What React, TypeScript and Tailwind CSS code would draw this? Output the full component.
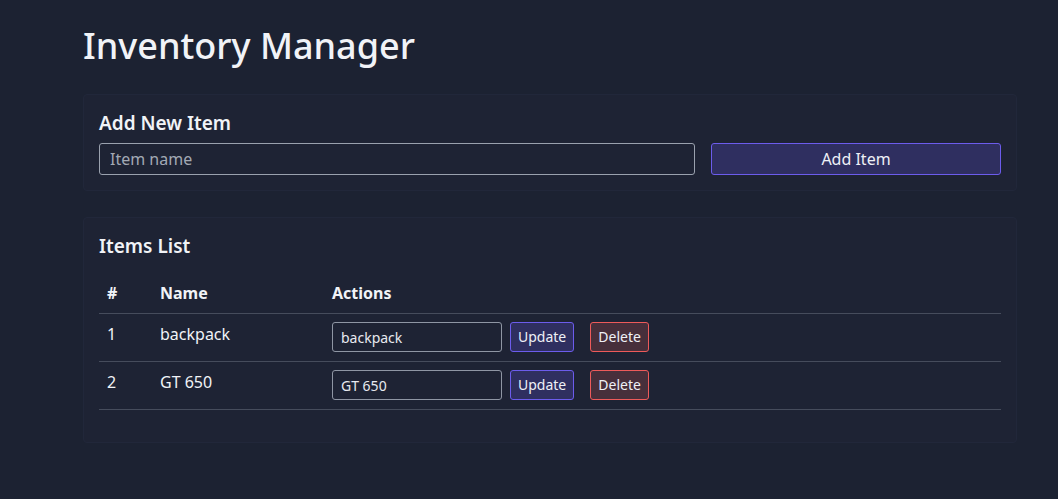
import React, { useState } from 'react'

type Item = { id: number; name: string }

const App = () => {
  const [items, setItems] = useState<Item[]>([
    { id: 1, name: 'backpack' },
    { id: 2, name: 'GT 650' }
  ])
  const [drafts, setDrafts] = useState<Record<number, string>>({ 1: 'backpack', 2: 'GT 650' })
  const [newName, setNewName] = useState('')

  const addItem = () => {
    if (!newName.trim()) return
    const id = items.length ? Math.max(...items.map((i) => i.id)) + 1 : 1
    setItems([...items, { id, name: newName }])
    setDrafts({ ...drafts, [id]: newName })
    setNewName('')
  }

  const updateItem = (id: number) => {
    setItems(items.map((i) => (i.id === id ? { ...i, name: drafts[id] } : i)))
  }

  const deleteItem = (id: number) => {
    setItems(items.filter((i) => i.id !== id))
  }

  return (
    <div
      className="min-h-[499px] bg-[#1c2232] text-[#f1f3f7] pl-[83px] pr-[41px] pt-[22px] pb-10"
      style={{ fontFamily: '"Noto Sans", "Open Sans", sans-serif' }}
    >
      <h1 className="text-[36px] leading-[48px] font-medium mb-[24px]">Inventory Manager</h1>

      {/* Add form */}
      <div className="bg-[#1e2334] border border-[#21273a] rounded px-[15px] pt-[14px] pb-[15px] mb-[26px]">
        <h2 className="text-[19px] leading-[28px] font-semibold mb-[6px]">Add New Item</h2>
        <div className="flex gap-4">
          <input
            value={newName}
            onChange={(e) => setNewName(e.target.value)}
            placeholder="Item name"
            className="flex-1 h-8 bg-transparent border border-[#9aa1ae] rounded-[3px] px-2.5 text-base text-[#e5e7eb] placeholder:text-[#a3a9b4] outline-none"
          />
          <button
            onClick={addItem}
            className="w-[290px] h-8 bg-[#2f2f60] border border-[#6c5cec] rounded-[3px] text-base text-[#eef0f6]"
          >
            Add Item
          </button>
        </div>
      </div>

      {/* Items list */}
      <div className="bg-[#1e2334] border border-[#21273a] rounded px-[15px] pt-[14px] pb-[32px]">
        <h2 className="text-[19px] leading-[28px] font-semibold mb-[13px]">Items List</h2>
        <table className="w-full border-collapse text-left">
          <thead>
            <tr className="border-b border-[#464c5c]">
              <th className="w-[53px] px-2 py-2 text-base leading-6 font-bold align-top">#</th>
              <th className="w-[172px] px-2 py-2 text-base leading-6 font-bold align-top">Name</th>
              <th className="px-2 py-2 text-base leading-6 font-bold align-top">Actions</th>
            </tr>
          </thead>
          <tbody>
            {items.map((item, idx) => (
              <tr key={item.id} className="border-b border-[#464c5c]">
                <td className="px-2 py-2 text-base leading-6 align-top">{idx + 1}</td>
                <td className="px-2 py-2 text-base leading-6 align-top">{item.name}</td>
                <td className="px-2 pt-2 pb-[9px] align-top">
                  <div className="flex items-start">
                    <input
                      value={drafts[item.id] ?? ''}
                      onChange={(e) => setDrafts({ ...drafts, [item.id]: e.target.value })}
                      className="w-[170px] h-[30px] bg-transparent border border-[#8f96a4] rounded-[3px] px-2 text-sm text-[#e8eaf0] outline-none"
                    />
                    <button
                      onClick={() => updateItem(item.id)}
                      className="ml-2 h-[30px] px-[7px] bg-[#2f2f60] border border-[#6c5cec] rounded-[3px] text-sm text-[#eef0f6]"
                    >
                      Update
                    </button>
                    <button
                      onClick={() => deleteItem(item.id)}
                      className="ml-4 h-[30px] px-[7px] bg-[#472f3b] border border-[#ee5a5a] rounded-[3px] text-sm text-[#eef0f6]"
                    >
                      Delete
                    </button>
                  </div>
                </td>
              </tr>
            ))}
          </tbody>
        </table>
      </div>
    </div>
  )
}

export default App
